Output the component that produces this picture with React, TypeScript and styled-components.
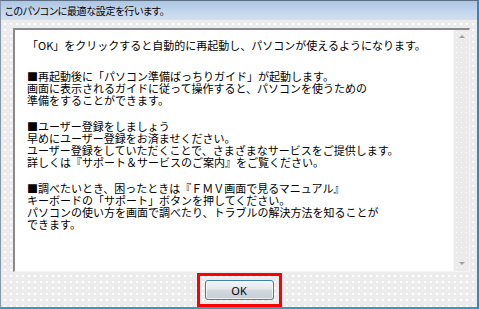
import React from "react";
import styled, { createGlobalStyle } from "styled-components";

const Global = createGlobalStyle`
  html, body { margin: 0; padding: 0; background: #ffffff; }
  body { font-family: "Noto Sans CJK JP", "Noto Sans", sans-serif; }
`;

const Window = styled.div`
  width: 479px;
  height: 309px;
  box-sizing: border-box;
  display: flex;
  flex-direction: column;
  border-top: 1px solid #5d6e82;
  border-left: 1px solid #8595a8;
  border-right: 2px solid #3d86b8;
  border-bottom: 2px solid #3799c4;
  background-color: #ececec;
  background-image: radial-gradient(circle, #ffffff 0.8px, transparent 1px);
  background-size: 6px 6px;
  background-position: 1px 2px;
  overflow: hidden;
`;

const TitleBar = styled.div`
  height: 19px;
  flex: none;
  display: flex;
  align-items: center;
  padding-left: 4px;
  background: linear-gradient(to bottom, #aec6e3 0%, #c2d6ed 55%, #d0e0f2 100%);
  font-size: 10px;
  letter-spacing: -0.3px;
  font-feature-settings: "palt";
  color: #000;
`;

const Body = styled.div`
  flex: 1;
  display: flex;
  flex-direction: column;
  padding: 8px 7px 0 12px;
  min-height: 0;
`;

const TextBox = styled.div`
  height: 244px;
  box-sizing: border-box;
  display: flex;
  background: #ffffff;
  border-top: 2px solid #8a8a8a;
  border-left: 2px solid #8a8a8a;
  border-right: 1px solid #f4f4f4;
  border-bottom: 1px solid #f4f4f4;
`;

const Content = styled.div`
  flex: 1;
  padding: 9px 0 0 12px;
  font-size: 11px;
  line-height: 12px;
  color: #000;
`;

const Para = styled.div<{ $gap: number }>`
  margin-top: ${(p) => p.$gap}px;
`;

const Line = styled.div`
  white-space: nowrap;
  height: 12px;
`;

const ScrollBar = styled.div`
  width: 15px;
  flex: none;
  display: flex;
  flex-direction: column;
  justify-content: space-between;
  align-items: center;
  padding: 5px 0 6px;
  background-color: #ebebeb;
  background-image: radial-gradient(circle, #ffffff 0.8px, transparent 1px);
  background-size: 5px 5px;
  border-left: 1px solid #f6f6f6;
`;

const Arrow = styled.div<{ $down?: boolean }>`
  width: 0;
  height: 0;
  border-left: 3px solid transparent;
  border-right: 3px solid transparent;
  ${(p) =>
    p.$down
      ? "border-top: 3px solid #a0a0a0;"
      : "border-bottom: 3px solid #a0a0a0;"}
`;

const Footer = styled.div`
  flex: 1;
  display: flex;
  justify-content: center;
  align-items: flex-start;
  padding-top: 1px;
  margin: 0 -7px 0 -12px;
`;

const Highlight = styled.div`
  border: 3px solid #ff0000;
  padding: 4px 5px;
  display: flex;
`;

const Button = styled.button`
  width: 69px;
  height: 20px;
  box-sizing: border-box;
  border: 1px solid #3c7fb1;
  border-radius: 3px;
  background: linear-gradient(to bottom, #f2f5f7 0%, #e4e8ec 45%, #d2d8de 50%, #c6cdd4 100%);
  box-shadow: inset 0 0 0 1px rgba(255, 255, 255, 0.7);
  font-family: "Noto Sans", sans-serif;
  font-size: 11px;
  color: #000;
  padding: 0;
  display: flex;
  align-items: center;
  justify-content: center;
`;

const paragraphs: { gap: number; lines: string[] }[] = [
  {
    gap: 0,
    lines: ["「OK」をクリックすると自動的に再起動し、パソコンが使えるようになります。"],
  },
  {
    gap: 19,
    lines: [
      "■再起動後に「パソコン準備ばっちりガイド」が起動します。",
      "画面に表示されるガイドに従って操作すると、パソコンを使うための",
      "準備をすることができます。",
    ],
  },
  {
    gap: 14,
    lines: [
      "■ユーザー登録をしましょう",
      "早めにユーザー登録をお済ませください。",
      "ユーザー登録をしていただくことで、さまざまなサービスをご提供します。",
      "詳しくは『サポート＆サービスのご案内』をご覧ください。",
    ],
  },
  {
    gap: 14,
    lines: [
      "■調べたいとき、困ったときは『ＦＭＶ画面で見るマニュアル』",
      "キーボードの「サポート」ボタンを押してください。",
      "パソコンの使い方を画面で調べたり、トラブルの解決方法を知ることが",
      "できます。",
    ],
  },
];

export default function App() {
  return (
    <>
      <Global />
      <Window>
        <TitleBar>このパソコンに最適な設定を行います。</TitleBar>
        <Body>
          <TextBox>
            <Content>
              {paragraphs.map((p, i) => (
                <Para key={i} $gap={p.gap}>
                  {p.lines.map((l, j) => (
                    <Line key={j}>{l}</Line>
                  ))}
                </Para>
              ))}
            </Content>
            <ScrollBar>
              <Arrow />
              <Arrow $down />
            </ScrollBar>
          </TextBox>
          <Footer>
            <Highlight>
              <Button>OK</Button>
            </Highlight>
          </Footer>
        </Body>
      </Window>
    </>
  );
}
